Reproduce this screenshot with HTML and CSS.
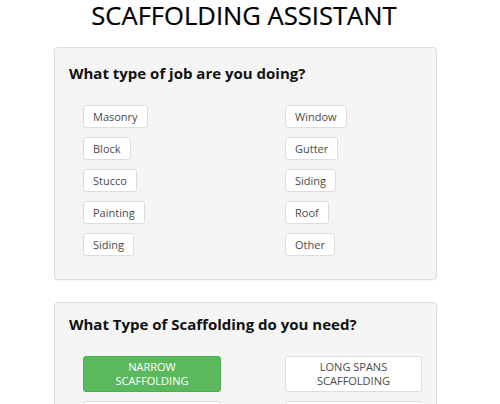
FILE: index.html
```html
<!DOCTYPE html>
<html>
<head>
<meta charset="utf-8">
<link rel="stylesheet" href="styles.css">
</head>
<body>
<div class="page">
  <h1 class="title">SCAFFOLDING ASSISTANT</h1>
  <section class="panel panel-first">
    <h2 class="question">What type of job are you doing?</h2>
    <div class="options">
      <div class="col">
        <span class="opt">Masonry</span>
        <span class="opt">Block</span>
        <span class="opt">Stucco</span>
        <span class="opt">Painting</span>
        <span class="opt">Siding</span>
      </div>
      <div class="col">
        <span class="opt">Window</span>
        <span class="opt">Gutter</span>
        <span class="opt">Siding</span>
        <span class="opt">Roof</span>
        <span class="opt">Other</span>
      </div>
    </div>
  </section>
  <section class="panel panel-second">
    <h2 class="question">What Type of Scaffolding do you need?</h2>
    <div class="options">
      <div class="col">
        <span class="big big-narrow active">NARROW<br>SCAFFOLDING</span>
        <span class="big big-narrow">MASON<br>SCAFFOLDING</span>
      </div>
      <div class="col">
        <span class="big">LONG SPANS<br>SCAFFOLDING</span>
        <span class="big">TOWER<br>SCAFFOLDING</span>
      </div>
    </div>
  </section>
</div>
</body>
</html>
```
FILE: styles.css
```css
html, body {
  margin: 0;
  padding: 0;
  background: #fff;
  font-family: "Open Sans", "DejaVu Sans", sans-serif;
  color: #111;
}
.page {
  width: 383px;
  margin-left: 54px;
}
.title {
  margin: 0 0 15px -3px;
  font-size: 25.6px;
  font-weight: 400;
  line-height: 32px;
  text-align: center;
  color: #000;
  -webkit-text-stroke: 0.2px #000;
}
.panel {
  background: #f5f5f5;
  border: 1px solid #dcdcdc;
  border-radius: 4px;
  padding: 15px 14px 23px 28px;
  box-shadow: 0 1px 1px rgba(0,0,0,0.04);
}
.panel-second {
  margin-top: 22px;
  padding-top: 11px;
}
.question {
  margin: 0 0 22px -14px;
  font-size: 15px;
  font-weight: 700;
  line-height: 20px;
  color: #111;
}
.options {
  display: grid;
  grid-template-columns: 202px 1fr;
}
.col {
  display: flex;
  flex-direction: column;
  align-items: flex-start;
  gap: 9px;
}
.opt {
  display: block;
  box-sizing: border-box;
  height: 23px;
  line-height: 21px;
  padding: 0 9px;
  font-size: 11px;
  color: #4a4a4a;
  background: #fff;
  border: 1px solid #ddd;
  border-radius: 3px;
}
.big {
  display: block;
  box-sizing: border-box;
  align-self: stretch;
  height: 36px;
  padding: 3px 4px;
  font-size: 11px;
  line-height: 14px;
  text-align: center;
  color: #4a4a4a;
  background: #fff;
  border: 1px solid #ddd;
  border-radius: 3px;
}
.big-narrow {
  align-self: flex-start;
  width: 138px;
}
.big.active {
  background: #5cb85c;
  border-color: #4cae4c;
  color: #fff;
}
```
